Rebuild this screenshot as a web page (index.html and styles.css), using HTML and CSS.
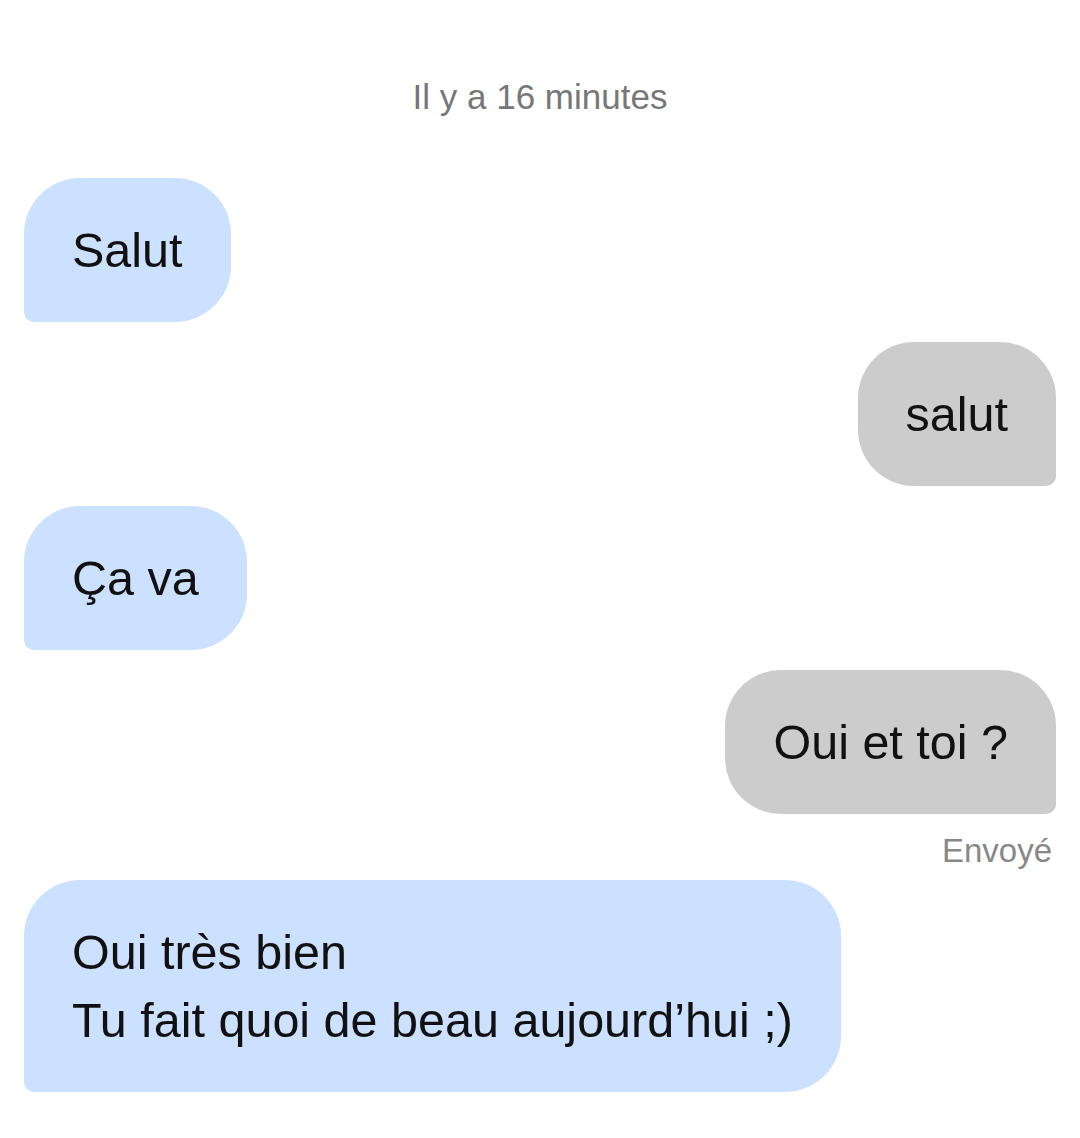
FILE: index.html
```html
<!DOCTYPE html>
<html lang="fr">
<head>
  <meta charset="UTF-8">
  <meta name="viewport" content="width=device-width, initial-scale=1.0">
  <title>Conversation</title>
  <link rel="stylesheet" href="styles.css">
</head>
<body>
  <div class="chat">
    <div class="timestamp">Il y a 16 minutes</div>

    <div class="message received first">Salut</div>
    <div class="message sent">salut</div>
    <div class="message received">Ça va</div>
    <div class="message sent">Oui et toi ?</div>
    <div class="status">Envoyé</div>
    <div class="message received after-status">Oui très bien<br>Tu fait quoi de beau aujourd’hui ;)</div>
  </div>
</body>
</html>
```

FILE: styles.css
```css
body {
  font-family: "Liberation Sans", Arial, sans-serif;
  margin: 0;
  padding: 0;
  background-color: #fff;
  color: #111;
}
.chat {
  display: flex;
  flex-direction: column;
  padding: 77px 24px 40px;
}
.timestamp {
  text-align: center;
  font-size: 35px;
  line-height: 40px;
  color: #777;
}
.message {
  margin-top: 20px;
  padding: 38px 48px;
  font-size: 48.5px;
  line-height: 68px;
  white-space: nowrap;
  width: max-content;
}
.message.first {
  margin-top: 61px;
}
.received {
  align-self: flex-start;
  background: #cce0ff;
  border-radius: 56px 56px 56px 10px;
}
.sent {
  align-self: flex-end;
  background: #cccccc;
  border-radius: 56px 56px 10px 56px;
}
.status {
  align-self: flex-end;
  margin-top: 17px;
  margin-right: 4px;
  font-size: 33px;
  line-height: 40px;
  color: #888;
}
.message.after-status {
  margin-top: 9px;
}
```
